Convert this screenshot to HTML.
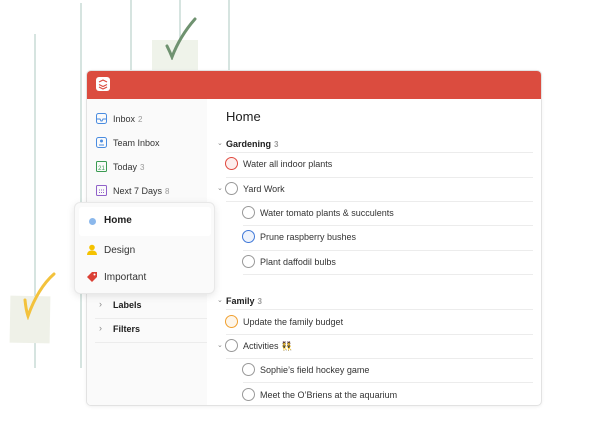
<!DOCTYPE html>
<html><head><meta charset="utf-8"><style>
*{margin:0;padding:0;box-sizing:border-box}
body{width:612px;height:432px;background:#fff;position:relative;overflow:hidden;font-family:"Liberation Sans",sans-serif;color:#202020}
.a{position:absolute}
.vl{position:absolute;width:2px;background:#d6e4e0}
.win{left:86px;top:70px;width:456px;height:336px;border-radius:5px;border:1px solid #e2e2e2;background:#fff;overflow:hidden;box-shadow:0 1px 3px rgba(0,0,0,.06)}
.hdr{left:0;top:0;width:456px;height:28px;background:#db4c3f}
.side{left:0;top:28px;width:120px;height:308px;background:#fafafa}
.t{font-size:9px;color:#333;white-space:nowrap}
.n{color:#999;font-size:8px;margin-left:3px}
.c{position:absolute;width:13px;height:13px;border-radius:50%;border:1.2px solid #999}
.sep{position:absolute;height:1px;background:#ececec}
.chev{position:absolute;font-size:7px;color:#888}
</style></head><body>
<div class="vl" style="left:34px;top:34px;height:334px"></div>
<div class="vl" style="left:80px;top:3px;height:365px"></div>
<div class="vl" style="left:130px;top:0;height:70px"></div>
<div class="vl" style="left:179px;top:0;height:70px"></div>
<div class="vl" style="left:228px;top:0;height:70px"></div>
<div class="a" style="left:152px;top:40px;width:46px;height:30px;background:#eff3ea"></div>
<svg class="a" style="left:160px;top:16px" width="40" height="44"><path d="M7 30 Q10 36 12 41 Q20 20 35 3" stroke="#6f9270" stroke-width="3" fill="none" stroke-linecap="round"/></svg>
<div class="a" style="left:10px;top:296px;width:40px;height:47px;background:#eff1e8;transform:rotate(1deg)"></div>
<svg class="a" style="left:20px;top:270px" width="40" height="50"><path d="M5 30 Q6 40 8 46 Q18 18 34 4" stroke="#f3c23c" stroke-width="3" fill="none" stroke-linecap="round"/></svg>

<div class="a win">
 <div class="a hdr"><div class="a" style="left:9px;top:6px;width:14px;height:14px;background:#fff;border-radius:3px"><svg width="14" height="14"><path d="M3 5l4-2 4 2M3 7.5l4 2 4-2M3 10l4 2 4-2" stroke="#db4c3f" stroke-width="1.2" fill="none"/></svg></div></div>
 <div class="a side">
  <svg class="a" style="left:9px;top:14px" width="11" height="11"><rect x=".5" y=".5" width="10" height="10" rx="2" fill="none" stroke="#4a8ce0"/><path d="M1 6h3l1 2h1l1-2h3" stroke="#4a8ce0" fill="none"/></svg>
  <div class="a t" style="left:26px;top:15px">Inbox<span class="n">2</span></div>
  <svg class="a" style="left:9px;top:38px" width="11" height="11"><rect x=".5" y=".5" width="10" height="10" rx="2" fill="none" stroke="#4a8ce0"/><circle cx="5.5" cy="4" r="1.5" fill="#4a8ce0"/><path d="M3 8h5" stroke="#4a8ce0"/></svg>
  <div class="a t" style="left:26px;top:39px">Team Inbox</div>
  <svg class="a" style="left:9px;top:62px" width="11" height="11"><rect x=".5" y=".5" width="10" height="10" rx="1" fill="none" stroke="#3a9b52"/><text x="5.5" y="9" font-size="6" text-anchor="middle" fill="#3a9b52" font-family="Liberation Sans">21</text></svg>
  <div class="a t" style="left:26px;top:63px">Today<span class="n">3</span></div>
  <svg class="a" style="left:9px;top:86px" width="11" height="11"><rect x=".5" y=".5" width="10" height="10" rx="1" fill="none" stroke="#9061c9"/><path d="M3 5h1M5 5h1M7 5h1M3 7.5h1M5 7.5h1M7 7.5h1" stroke="#9061c9"/></svg>
  <div class="a t" style="left:26px;top:87px">Next 7 Days<span class="n">8</span></div>
  <div class="chev" style="left:12px;top:200px;font-size:9px">›</div>
  <div class="a t" style="left:26px;top:201px;font-weight:bold;color:#202020">Labels</div>
  <div class="sep" style="left:8px;top:219px;width:112px"></div>
  <div class="chev" style="left:12px;top:224px;font-size:9px">›</div>
  <div class="a t" style="left:26px;top:225px;font-weight:bold;color:#202020">Filters</div>
  <div class="sep" style="left:8px;top:243px;width:112px"></div>
 </div>
 <div class="a" style="left:139px;top:38px;font-size:13px;font-weight:500">Home</div>
 <div class="chev" style="left:130px;top:68px">⌄</div>
 <div class="a t" style="left:139px;top:68px;font-weight:bold;color:#202020">Gardening<span class="n">3</span></div>
 <div class="sep" style="left:139px;top:81px;width:307px"></div>
 <div class="c" style="left:138px;top:86px;border-color:#e0483e;background:#fdeeed"></div>
 <div class="a t" style="left:156px;top:88px">Water all indoor plants</div>
 <div class="sep" style="left:139px;top:106px;width:307px"></div>
 <div class="chev" style="left:130px;top:113px">⌄</div>
 <div class="c" style="left:138px;top:111px"></div>
 <div class="a t" style="left:156px;top:113px">Yard Work</div>
 <div class="sep" style="left:139px;top:130px;width:307px"></div>
 <div class="c" style="left:155px;top:135px"></div>
 <div class="a t" style="left:173px;top:137px">Water tomato plants &amp; succulents</div>
 <div class="sep" style="left:156px;top:154px;width:290px"></div>
 <div class="c" style="left:155px;top:159px;border-color:#3f78d8;background:#eef3fc"></div>
 <div class="a t" style="left:173px;top:161px">Prune raspberry bushes</div>
 <div class="sep" style="left:156px;top:179px;width:290px"></div>
 <div class="c" style="left:155px;top:184px"></div>
 <div class="a t" style="left:173px;top:186px">Plant daffodil bulbs</div>
 <div class="sep" style="left:156px;top:203px;width:290px"></div>
 <div class="chev" style="left:130px;top:225px">⌄</div>
 <div class="a t" style="left:139px;top:225px;font-weight:bold;color:#202020">Family<span class="n">3</span></div>
 <div class="sep" style="left:139px;top:238px;width:307px"></div>
 <div class="c" style="left:138px;top:244px;border-color:#f0a030;background:#fef6ea"></div>
 <div class="a t" style="left:156px;top:246px">Update the family budget</div>
 <div class="sep" style="left:139px;top:263px;width:307px"></div>
 <div class="chev" style="left:130px;top:270px">⌄</div>
 <div class="c" style="left:138px;top:268px"></div>
 <div class="a t" style="left:156px;top:270px">Activities <span style="font-size:9px">👯</span></div>
 <div class="sep" style="left:139px;top:287px;width:307px"></div>
 <div class="c" style="left:155px;top:292px"></div>
 <div class="a t" style="left:173px;top:294px">Sophie’s field hockey game</div>
 <div class="sep" style="left:156px;top:311px;width:290px"></div>
 <div class="c" style="left:155px;top:317px"></div>
 <div class="a t" style="left:173px;top:319px">Meet the O’Briens at the aquarium</div>
</div>

<div class="a" style="left:74px;top:202px;width:141px;height:92px;background:#fafafa;border-radius:6px;border:1px solid #e8e8e8;box-shadow:0 2px 8px rgba(0,0,0,.1)">
 <div class="a" style="left:4px;top:4px;width:132px;height:29px;background:#fff;border-radius:3px"></div>
 <div class="a" style="left:14px;top:15px;width:7px;height:7px;border-radius:50%;background:#8bb8ec"></div>
 <div class="a" style="left:29px;top:12px;font-size:10px;font-weight:bold">Home</div>
 <svg class="a" style="left:11px;top:41px" width="12" height="12"><circle cx="6" cy="3.5" r="2.8" fill="#f5c200"/><path d="M1 11q0-4.5 5-4.5t5 4.5z" fill="#f5c200"/></svg>
 <div class="a" style="left:29px;top:42px;font-size:10px;color:#333">Design</div>
 <svg class="a" style="left:11px;top:68px" width="12" height="12"><path d="M1 6L6 1h5v5l-5 5z" fill="#db4035"/><circle cx="8.5" cy="3.5" r="1" fill="#fff"/></svg>
 <div class="a" style="left:29px;top:69px;font-size:10px;color:#333">Important</div>
</div>
</body></html>
